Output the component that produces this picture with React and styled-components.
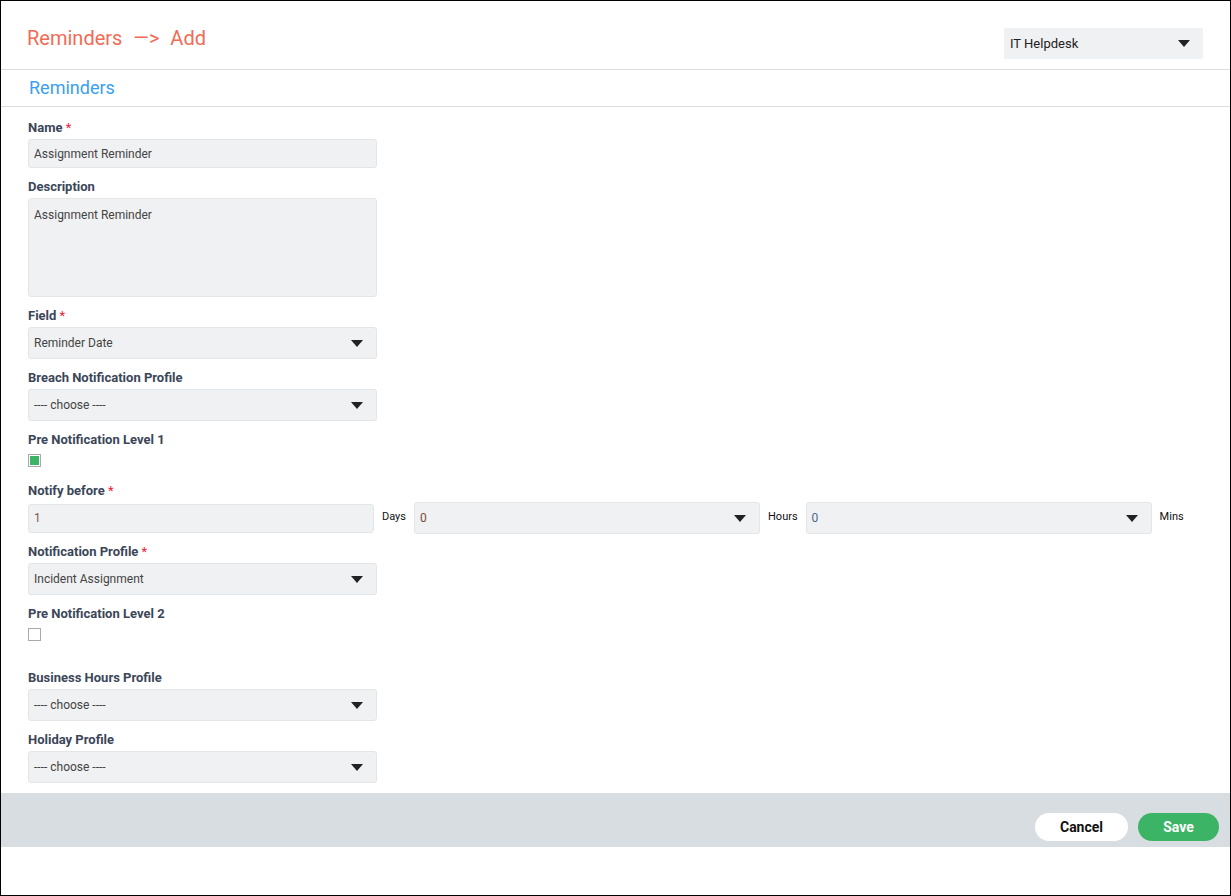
import React from 'react';
import styled, { createGlobalStyle } from 'styled-components';

const Global = createGlobalStyle`
  html, body { margin: 0; background: #fff; }
  body { font-family: Roboto, "Liberation Sans", sans-serif; }
`;

const Frame = styled.div`
  width: 1231px;
  height: 896px;
  box-sizing: border-box;
  border: 1px solid #000;
  display: flex;
  flex-direction: column;
`;

const Header = styled.div`
  height: 68px;
  display: flex;
  justify-content: space-between;
  align-items: flex-start;
  padding: 0 27px 0 26px;
  border-bottom: 1px solid #ddd;
`;

const Title = styled.div`
  margin-top: 25px;
  font-size: 20px;
  color: #f26b55;
  word-spacing: 6px;
`;

const TopSelect = styled.div`
  margin-top: 27px;
  width: 199px;
  height: 31px;
  background: #f0f1f2;
  border-radius: 2px;
  display: flex;
  align-items: center;
  justify-content: space-between;
  padding: 0 13px 0 6px;
  box-sizing: border-box;
  font-size: 13px;
  color: #222;
`;

const SubHeader = styled.div`
  height: 37px;
  display: flex;
  align-items: center;
  padding-left: 28px;
  font-size: 18px;
  color: #3a9ff0;
  border-bottom: 1px solid #ddd;
`;

const Form = styled.div`
  flex: 1;
  padding: 13px 0 0 27px;
  display: flex;
  flex-direction: column;
`;

const Label = styled.div`
  font-size: 13px;
  font-weight: 700;
  color: #3b4658;
  height: 16px;
  line-height: 16px;
  margin-top: ${p => p.$top || 0}px;
  margin-bottom: 3px;
  span { color: #f0203a; font-weight: 400; }
`;

const Box = styled.div`
  width: ${p => p.$w || 349}px;
  height: ${p => p.$h || 32}px;
  background: #f0f1f2;
  border: 1px solid #e4e5e7;
  border-radius: 3px;
  box-sizing: border-box;
  display: flex;
  align-items: ${p => (p.$area ? 'flex-start' : 'center')};
  justify-content: space-between;
  padding: ${p => (p.$area ? '9px 5px' : '0 13px 0 5px')};
  font-size: 12px;
  color: ${p => p.$color || '#444'};
`;

const Caret = styled.span`
  width: 0;
  height: 0;
  border-left: 6px solid transparent;
  border-right: 6px solid transparent;
  border-top: 7px solid #222;
`;

const Check = styled.div`
  margin-top: 3px;
  width: 13px;
  height: 13px;
  box-sizing: border-box;
  border: 1px solid #aaa;
  background: #fff;
  padding: 1px;
  &::after {
    content: '';
    display: ${p => (p.$on ? 'block' : 'none')};
    width: 100%;
    height: 100%;
    background: #3cb465;
  }
`;

const Row = styled.div`
  display: flex;
  align-items: center;
`;

const Unit = styled.span`
  font-size: 11px;
  color: #111;
  margin: -4px 8px 0 8px;
`;

const Footer = styled.div`
  height: 48px;
  margin-top: 10px;
  margin-bottom: 48px;
  background: #d7dde0;
  display: flex;
  justify-content: flex-end;
  align-items: flex-end;
  gap: 10px;
  padding: 0 11px 6px 0;
`;

const Btn = styled.button`
  width: ${p => (p.$primary ? 81 : 93)}px;
  height: 28px;
  border: none;
  border-radius: 14px;
  font-family: inherit;
  font-weight: 700;
  font-size: 14px;
  background: ${p => (p.$primary ? '#3cb465' : '#fff')};
  color: ${p => (p.$primary ? '#fff' : '#111')};
`;

const Select = ({ value, w, color }) => (
  <Box $w={w} $color={color}>{value}<Caret /></Box>
);

export default function App() {
  return (
    <>
      <Global />
      <Frame>
        <Header>
          <Title>Reminders —&gt; Add</Title>
          <TopSelect>IT Helpdesk<Caret /></TopSelect>
        </Header>
        <SubHeader>Reminders</SubHeader>
        <Form>
          <Label>Name <span>*</span></Label>
          <Box $h={29}>Assignment Reminder</Box>
          <Label $top={11}>Description</Label>
          <Box $h={99} $area>Assignment Reminder</Box>
          <Label $top={11}>Field <span>*</span></Label>
          <Select value="Reminder Date" />
          <Label $top={11}>Breach Notification Profile</Label>
          <Select value="---- choose ----" />
          <Label $top={11}>Pre Notification Level 1</Label>
          <Check $on />
          <Label $top={16}>Notify before <span>*</span></Label>
          <Row>
            <Box $w={346} $h={29} $color="#7a5a55">1</Box>
            <Unit>Days</Unit>
            <Select value="0" w={346} color="#7a4a40" />
            <Unit>Hours</Unit>
            <Select value="0" w={346} color="#4a6a90" />
            <Unit>Mins</Unit>
          </Row>
          <Label $top={10}>Notification Profile <span>*</span></Label>
          <Select value="Incident Assignment" />
          <Label $top={11}>Pre Notification Level 2</Label>
          <Check />
          <Label $top={29}>Business Hours Profile</Label>
          <Select value="---- choose ----" />
          <Label $top={11}>Holiday Profile</Label>
          <Select value="---- choose ----" />
        </Form>
        <Footer>
          <Btn>Cancel</Btn>
          <Btn $primary>Save</Btn>
        </Footer>
      </Frame>
    </>
  );
}
